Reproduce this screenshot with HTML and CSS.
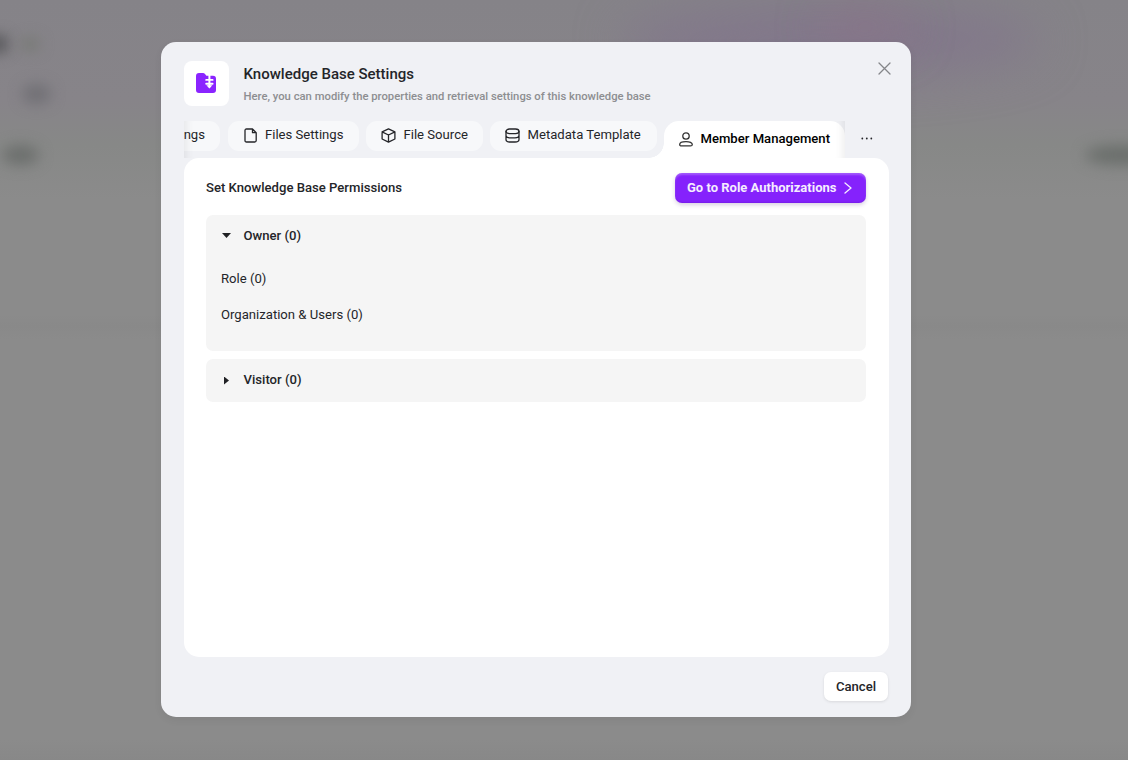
FILE: index.html
```
<!DOCTYPE html>
<html lang="en">
<head>
    <meta charset="UTF-8">
    <meta name="viewport" content="width=device-width, initial-scale=1.0">
    <title>Knowledge Base Settings</title>
    <link rel="stylesheet" href="styles.css">
</head>
<body>
    <!-- Blurred page behind the dialog -->
    <div class="backdrop">
        <span class="glow glow-violet"></span>
        <span class="glow glow-pink"></span>
        <span class="smudge smudge-logo"></span>
        <span class="smudge smudge-tag"></span>
        <span class="smudge smudge-menu"></span>
        <span class="smudge smudge-item"></span>
        <span class="smudge smudge-action"></span>
    </div>

    <div class="modal" role="dialog">
        <button class="close" aria-label="Close">
            <svg width="13" height="13" viewBox="0 0 13 13"><path d="M1 1l11 11M12 1L1 12"/></svg>
        </button>

        <header class="modal-header">
            <div class="logo">
                <svg width="20" height="20" viewBox="0 0 20 20">
                    <path fill="#8a24ff" d="M3 0H7Q8.200 0 9 1L10.400 2.700H17Q20 2.700 20 5.700V17Q20 20 17 20H3Q0 20 0 17V3Q0 0 3 0Z"/>
                    <path fill="none" stroke="#fff" stroke-width="2" d="M13.400 2.500v11"/>
                    <path fill="none" stroke="#fff" stroke-width="1.900" d="M10.200 6.900h6.400M10.200 10.700h6.400"/>
                    <path fill="#fff" d="M10.400 12.200h6l-3 3.200z"/>
                </svg>
            </div>
            <div>
                <h1>Knowledge Base Settings</h1>
                <p>Here, you can modify the properties and retrieval settings of this knowledge base</p>
            </div>
        </header>

        <nav class="tabs">
            <div class="tabs-scroll">
                <a class="tab tab-basic">Basic Settings</a>
                <a class="tab tab-files">
                    <svg width="14" height="15" viewBox="0 0 14 15"><path d="M3 1h5.500l3.700 3.700V12.500q0 1.500-1.500 1.500H2.500q-1.500 0-1.500-1.500v-10Q1 1 2.500 1zM8.500 1v3.700h3.700"/></svg>
                    Files Settings
                </a>
                <a class="tab tab-source">
                    <svg width="15" height="15" viewBox="0 0 15 15"><path d="M7.500 .9l6.400 2.900v7.200l-6.400 3.200-6.400-3.200V3.800zM1.100 3.900L7.500 7l6.400-3.100M7.500 7v7.200"/></svg>
                    File Source
                </a>
                <a class="tab tab-metadata">
                    <svg width="15" height="15" viewBox="0 0 15 15"><rect x="1" y="1" width="13" height="4.600" rx="3.500" ry="2.300"/><path d="M1 3.300v8.200c0 1.700 1.600 2.500 4 2.500h5c2.400 0 4-.8 4-2.500V3.300M1 7.300c0 1.700 1.600 2.500 4 2.500h5c2.400 0 4-.8 4-2.500"/></svg>
                    Metadata Template
                </a>
                <a class="tab tab-members active">
                    <svg width="14" height="15" viewBox="0 0 14 15"><circle cx="7" cy="4" r="3.200"/><path d="M2.500 13.900Q.7 13.900.7 12.400C.7 10.600 3.300 9.600 7 9.600s6.300 1 6.300 2.800q0 1.500-1.800 1.500z"/></svg>
                    Member Management
                </a>
            </div>
            <button class="more" aria-label="More tabs">
                <svg width="12" height="3" viewBox="0 0 12 3"><circle cx="1.300" cy="1.500" r=".9"/><circle cx="5.800" cy="1.500" r=".9"/><circle cx="10.300" cy="1.500" r=".9"/></svg>
            </button>
        </nav>

        <main class="panel">
            <div class="panel-head">
                <h2>Set Knowledge Base Permissions</h2>
                <button class="btn-primary">
                    Go to Role Authorizations
                    <svg width="8" height="12" viewBox="0 0 8 12"><path d="M1 1l6 5-6 5"/></svg>
                </button>
            </div>

            <section class="group open">
                <h3><span class="caret"></span>Owner (0)</h3>
                <p>Role (0)</p>
                <p>Organization &amp; Users (0)</p>
            </section>
            <section class="group">
                <h3><span class="caret"></span>Visitor (0)</h3>
            </section>
        </main>

        <footer class="modal-footer">
            <button class="btn-cancel">Cancel</button>
        </footer>
    </div>
</body>
</html>
```
FILE: styles.css
```
* {
    box-sizing: border-box;
}

body {
    margin: 0;
    height: 760px;
    overflow: hidden;
    font-family: Roboto, "Liberation Sans", sans-serif;
    font-size: 13.125px;
    color: #242529;
}

h1, h2, h3, p {
    margin: 0;
}

button {
    font: inherit;
    border: 0;
    padding: 0;
    background: none;
}

svg {
    flex: none;
    fill: none;
    stroke: currentColor;
    stroke-width: 1.3;
    stroke-linejoin: round;
    stroke-linecap: round;
}

/* Backdrop */
.backdrop {
    position: absolute;
    inset: 0;
    overflow: hidden;
    background: linear-gradient(#858388 0, #878489 100px, #878887 145px, #8b8b8b 200px, #8b8b8b 315px, #898989 326px, #8b8b8b 340px, #8b8b8b 740px, #888888 760px);
}

.glow,
.smudge {
    position: absolute;
    border-radius: 50%;
}

.glow {
    filter: blur(24px);
}

.glow-violet {
    left: 620px;
    top: 5px;
    width: 420px;
    height: 70px;
    background: rgba(128, 114, 140, 0.7);
}

.glow-pink {
    left: 820px;
    top: 10px;
    width: 90px;
    height: 35px;
    background: rgba(143, 112, 135, 0.5);
}

.smudge {
    filter: blur(7px);
}

.smudge-logo {
    left: -15px;
    top: 34px;
    width: 24px;
    height: 20px;
    background: #59595c;
}

.smudge-tag {
    left: 20px;
    top: 37px;
    width: 20px;
    height: 14px;
    background: #777975;
}

.smudge-menu {
    left: 22px;
    top: 84px;
    width: 29px;
    height: 20px;
    background: #717075;
}

.smudge-item {
    left: 2px;
    top: 145px;
    width: 37px;
    height: 20px;
    background: #6c6f6d;
}

.smudge-action {
    left: 1085px;
    top: 145px;
    width: 70px;
    height: 20px;
    background: #6b6f6c;
}

/* Dialog */
.modal {
    position: relative;
    display: flex;
    flex-direction: column;
    width: 750px;
    height: 675px;
    margin: 42px 0 0 161px;
    padding: 19px 22px 15px 23px;
    border-radius: 15px;
    background: #f0f1f5;
    box-shadow: 0 3px 8px rgba(0, 0, 0, 0.06);
}

.close {
    position: absolute;
    top: 20px;
    right: 20px;
    display: flex;
    color: #85868a;
}

.modal-header {
    display: flex;
    gap: 14.5px;
    height: 60px;
}

.logo {
    display: flex;
    align-items: center;
    justify-content: center;
    width: 45px;
    height: 45px;
    padding: 0 1px 1px 0;
    border-radius: 8px;
    background: #fff;
}

.logo svg {
    stroke: none;
}

.modal-header h1 {
    margin-top: 4px;
    font-size: 15px;
    line-height: 18px;
    font-weight: 500;
}

.modal-header p {
    margin-top: 6px;
    font-size: 11.28px;
    line-height: 16px;
    font-weight: 500;
    color: #8d8e91;
}

/* Tabs */
.tabs {
    display: flex;
    height: 37px;
}

.tabs-scroll {
    position: relative;
    display: flex;
    justify-content: flex-end;
    gap: 7.5px;
    width: 661px;
    overflow: hidden;
}

.tabs-scroll::before,
.tabs-scroll::after {
    content: "";
    position: absolute;
    top: 0;
    bottom: 0;
    width: 30px;
    pointer-events: none;
}

.tabs-scroll::before {
    left: 0;
    box-shadow: inset 10px 0 8px -8px rgba(0, 0, 0, 0.08);
}

.tabs-scroll::after {
    right: 0;
    box-shadow: inset -10px 0 8px -8px rgba(0, 0, 0, 0.08);
}

.tab {
    display: flex;
    flex: none;
    align-items: center;
    gap: 7.5px;
    height: 30px;
    padding: 0 15px 3px;
    border-radius: 11px;
    background: #f7f8fa;
    white-space: nowrap;
}

.tab svg {
    position: relative;
    top: 1px;
}

.tab-files {
    width: 131px;
    padding-left: 16px;
}

.tab-source {
    width: 116.5px;
}

.tab-metadata {
    width: 166.5px;
}

.tab.active {
    position: relative;
    width: 181px;
    height: 37px;
    padding-bottom: 2px;
    border-radius: 15px 15px 0 0;
    background: #fff;
    color: #000;
    font-size: 13.1px;
    font-weight: 500;
}

.tab.active svg {
    color: #333;
}

/* Curved foot joining the active tab to the panel */
.tab.active::before {
    content: "";
    position: absolute;
    left: -15px;
    bottom: 0;
    width: 15px;
    height: 15px;
    background: radial-gradient(circle at 0 0, transparent 14.5px, #fff 15px);
}

.more {
    display: flex;
    flex: 1;
    align-items: center;
    justify-content: center;
    padding-bottom: 2px;
}

.more svg {
    fill: #242529;
    stroke: none;
}

/* Panel */
.panel {
    height: 499px;
    padding: 15px 23px 15px 22px;
    border-radius: 15px;
    background: #fff;
}

.panel-head {
    display: flex;
    align-items: center;
    justify-content: space-between;
    height: 30px;
    margin-bottom: 12px;
}

.panel-head h2 {
    padding-bottom: 2px;
    font-size: 13.125px;
    font-weight: 500;
}

.btn-primary {
    display: flex;
    align-items: center;
    justify-content: space-between;
    width: 191px;
    height: 30px;
    padding: 0 14px 2px 12px;
    border-radius: 7px;
    background: #8522fc;
    box-shadow: inset 0 2px 2px rgba(255, 255, 255, 0.25), inset 0 -1px 2px rgba(60, 0, 160, 0.2), 0 2px 4px rgba(60, 20, 110, 0.2);
    color: #f5edff;
    font-size: 13px;
    font-weight: 700;
}

.btn-primary svg {
    position: relative;
    top: 1px;
}

.group {
    height: 43px;
    margin-bottom: 8px;
    padding: 0 15px;
    border-radius: 7px;
    background: #f5f5f5;
}

.group.open {
    height: 136px;
}

.group h3 {
    display: flex;
    align-items: center;
    height: 41px;
    font-size: 13.125px;
    font-weight: 500;
}

.group p {
    margin-top: 5px;
    height: 31px;
    line-height: 31px;
}

.group h3 + p {
    margin-top: 7px;
}

.caret {
    width: 5px;
    height: 8px;
    margin: 2px 14.5px 0 3px;
    background: #202124;
    clip-path: polygon(0 0, 100% 50%, 0 100%);
}

.open .caret {
    width: 9px;
    height: 5px;
    margin: 0 12.5px 0 1px;
    clip-path: polygon(0 0, 100% 0, 50% 100%);
}

/* Footer */
.modal-footer {
    display: flex;
    justify-content: flex-end;
    padding: 15px 1px 0 0;
}

.btn-cancel {
    width: 64px;
    height: 29px;
    border-radius: 7px;
    background: #fff;
    box-shadow: 0 1px 3px rgba(0, 0, 0, 0.1);
    color: #242529;
    font-weight: 500;
}
```
